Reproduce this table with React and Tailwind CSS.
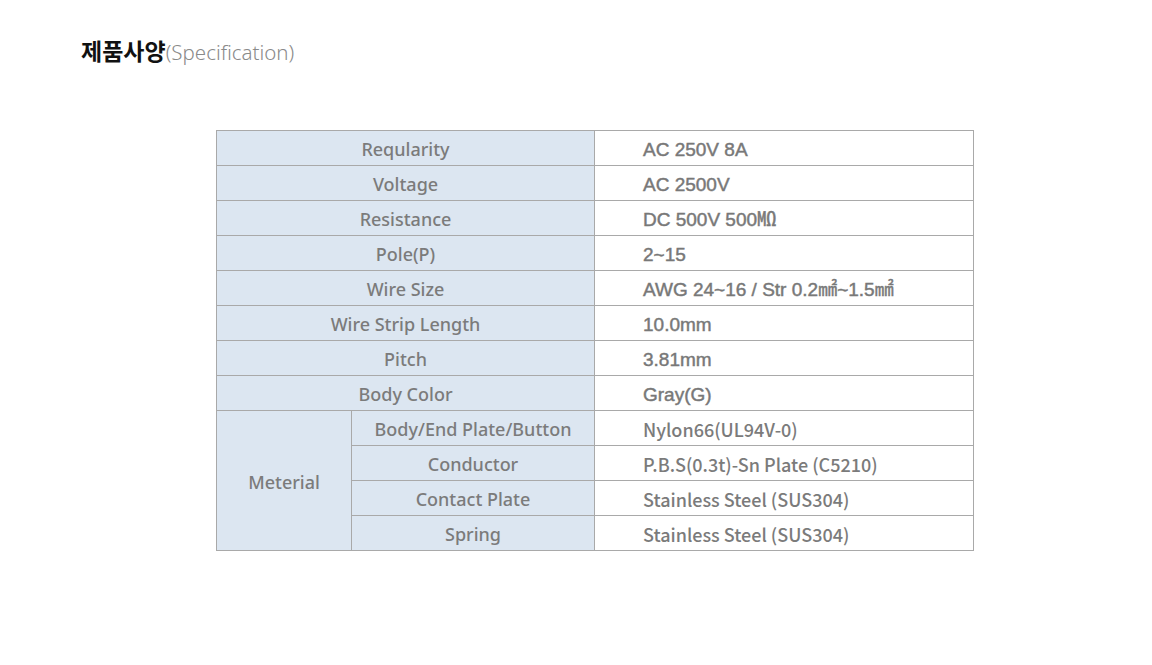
import React from "react";

const rows = [
  ["Reqularity", "AC 250V 8A"],
  ["Voltage", "AC 2500V"],
  ["Resistance", "DC 500V 500㏁"],
  ["Pole(P)", "2~15"],
  ["Wire Size", "AWG 24~16 / Str 0.2㎟~1.5㎟"],
  ["Wire Strip Length", "10.0mm"],
  ["Pitch", "3.81mm"],
  ["Body Color", "Gray(G)"],
];
const mat = [
  ["Body/End Plate/Button", "Nylon66(UL94V-0)"],
  ["Conductor", "P.B.S(0.3t)-Sn Plate (C5210)"],
  ["Contact Plate", "Stainless Steel (SUS304)"],
  ["Spring", "Stainless Steel (SUS304)"],
];

const th = "border border-[#a9a9a9] bg-[#dce6f1] text-center h-[35px] p-0 pt-[3px]";
const td = "border border-[#a9a9a9] bg-white text-left pl-[48px] h-[35px] p-0 pt-[3px]";
const tdA = "border border-[#a9a9a9] bg-white text-left pl-[48px] h-[35px] p-0 pt-[3px] font-normal text-[19px] text-[#787878] [-webkit-text-stroke:0.45px_#787878]";
const afont = { fontFamily: '"Liberation Sans", "Noto Sans CJK KR", sans-serif' };
const vfont = { fontFamily: '"Noto Sans CJK KR", "Noto Sans", sans-serif' };

export default function App() {
  return (
    <div className="w-[1152px] h-[665px] bg-white" style={{ fontFamily: '"Noto Sans", "Noto Sans CJK KR", sans-serif' }}>
      <div className="pt-[33px] pl-[81px] flex items-baseline">
        <span className="text-[23px] font-bold text-[#111]" style={{ fontFamily: '"Noto Sans CJK KR", sans-serif' }}>제품사양</span>
        <span className="text-[20.5px] text-[#8a8a8a] font-light">(Specification)</span>
      </div>
      <div className="pt-[62px] pl-[216px]">
        <table className="border-collapse w-[758px] text-[18px] font-medium text-[#7b7b7b] leading-none" style={{ tableLayout: "fixed" }}>
          <colgroup>
            <col className="w-[135px]" />
            <col className="w-[243px]" />
            <col className="w-[379px]" />
          </colgroup>
          <tbody>
            {rows.map(([k, v]) => (
              <tr key={k}>
                <td colSpan={2} className={th}>{k}</td>
                <td className={tdA} style={afont}>{v}</td>
              </tr>
            ))}
            {mat.map(([k, v], i) => (
              <tr key={k}>
                {i === 0 && (
                  <td rowSpan={4} className={th}>Meterial</td>
                )}
                <td className={th}>{k}</td>
                <td className={td} style={vfont}>{v}</td>
              </tr>
            ))}
          </tbody>
        </table>
      </div>
    </div>
  );
}
